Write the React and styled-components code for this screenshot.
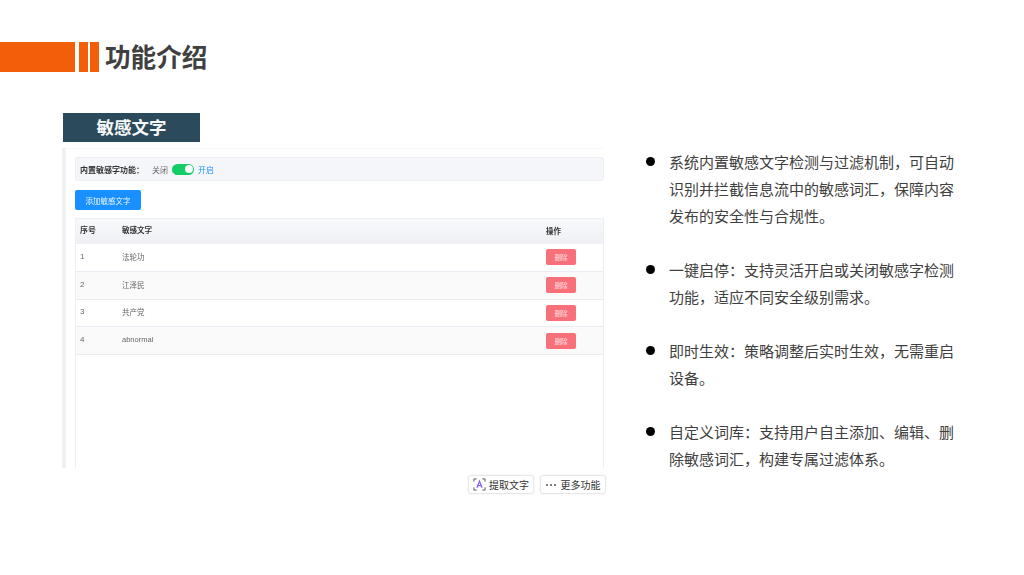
import React from 'react';
import styled, { createGlobalStyle } from 'styled-components';

const GlobalStyle = createGlobalStyle`
  html, body {
    margin: 0;
    padding: 0;
    background: #fff;
    font-family: "Noto Sans CJK SC", "Noto Sans", sans-serif;
  }
`;

const WORDS = [
  { id: 1, word: '法轮功' },
  { id: 2, word: '江泽民' },
  { id: 3, word: '共产党' },
  { id: 4, word: 'abnormal' },
];

const POINTS = [
  '系统内置敏感文字检测与过滤机制，可自动识别并拦截信息流中的敏感词汇，保障内容发布的安全性与合规性。',
  '一键启停：支持灵活开启或关闭敏感字检测功能，适应不同安全级别需求。',
  '即时生效：策略调整后实时生效，无需重启设备。',
  '自定义词库：支持用户自主添加、编辑、删除敏感词汇，构建专属过滤体系。',
];

export default function App() {
  return (
    <Slide>
      <GlobalStyle />
      <Header>
        <LongBar />
        <ShortBars>
          <ShortBar />
          <ShortBar />
        </ShortBars>
        <Title>功能介绍</Title>
      </Header>
      <Main>
        <LeftColumn>
          <Label>敏感文字</Label>
          <Shot>
            <ShotBody>
              <SwitchRow>
                <SwitchLabel>内置敏感字功能：</SwitchLabel>
                <SwitchOff>关闭</SwitchOff>
                <Toggle />
                <SwitchOn>开启</SwitchOn>
              </SwitchRow>
              <AddButton>添加敏感文字</AddButton>
              <Table>
                <HeadRow>
                  <IdCell>序号</IdCell>
                  <WordCell>敏感文字</WordCell>
                  <ActionCell>操作</ActionCell>
                </HeadRow>
                {WORDS.map(row => (
                  <Row key={row.id} $striped={row.id % 2 === 0}>
                    <IdCell>{row.id}</IdCell>
                    <WordCell>{row.word}</WordCell>
                    <ActionCell><DeleteButton>删除</DeleteButton></ActionCell>
                  </Row>
                ))}
              </Table>
            </ShotBody>
          </Shot>
          <ToolRow>
            <ToolButton>
              <svg width="13" height="13" viewBox="0 0 14 14" fill="none">
                <path d="M1 4V1h3M10 1h3v3M13 10v3h-3M4 13H1v-3" stroke="#555" strokeWidth="1" />
                <path d="M4.2 10.5 7 3.5l2.8 7M5.2 8.2h3.6" stroke="#8b5cf6" strokeWidth="1.3" />
              </svg>
              提取文字
            </ToolButton>
            <ToolButton>
              <Dots>
                <Dot />
                <Dot />
                <Dot />
              </Dots>
              更多功能
            </ToolButton>
          </ToolRow>
        </LeftColumn>
        <Points>
          {POINTS.map(text => (
            <Point key={text}>{text}</Point>
          ))}
        </Points>
      </Main>
    </Slide>
  );
}

const Slide = styled.div`
  width: 1024px;
  height: 575px;
  overflow: hidden;
  background: #fff;
  padding-top: 42px;
  box-sizing: border-box;
`;

const Header = styled.header`
  display: flex;
  align-items: center;
  height: 30px;
`;

const LongBar = styled.div`
  width: 75px;
  height: 30px;
  background: #f35f08;
`;

const ShortBars = styled.div`
  display: flex;
  gap: 2px;
  margin-left: 4px;
`;

const ShortBar = styled.div`
  width: 9px;
  height: 30px;
  background: #f35f08;
`;

const Title = styled.h1`
  margin: -3px 0 0 6px;
  font-size: 25.6px;
  line-height: 30px;
  font-weight: 700;
  color: #404040;
`;

const Main = styled.main`
  display: flex;
  margin-top: 41px;
  padding-left: 62px;
`;

const LeftColumn = styled.div`
  width: 544px;
  display: flex;
  flex-direction: column;
`;

const Label = styled.div`
  width: 137px;
  height: 29px;
  margin-left: 1px;
  background: #2b4a5b;
  color: #f4f6f8;
  font-size: 17.5px;
  font-weight: 700;
  line-height: 28px;
  text-align: center;
`;

const Shot = styled.div`
  width: 542px;
  height: 320px;
  margin-top: 6px;
  box-sizing: border-box;
  border-left: 4px solid #eff1f4;
  background: #fff;
  filter: blur(0.5px);
  overflow: hidden;
`;

const ShotBody = styled.div`
  padding: 8px 0 0 9px;
  height: 100%;
  box-sizing: border-box;
  display: flex;
  flex-direction: column;
  border-top: 1px solid #f8f9fa;
`;

const SwitchRow = styled.div`
  height: 24px;
  flex: none;
  box-sizing: border-box;
  display: flex;
  align-items: center;
  padding-left: 4px;
  background: #f5f6fa;
  border: 1px solid #eceef2;
  border-radius: 3px;
  font-size: 8px;
`;

const SwitchLabel = styled.span`
  color: #333;
  font-weight: 700;
  margin-right: 8px;
`;

const SwitchOff = styled.span`
  color: #666;
  margin-right: 4px;
`;

const SwitchOn = styled.span`
  color: #1890ff;
  margin-left: 4px;
`;

const Toggle = styled.span`
  position: relative;
  width: 22px;
  height: 11px;
  border-radius: 6px;
  background: #13ce66;

  &::after {
    content: "";
    position: absolute;
    top: 1.5px;
    right: 1.5px;
    width: 8px;
    height: 8px;
    border-radius: 50%;
    background: #fff;
  }
`;

const AddButton = styled.button`
  width: 66px;
  height: 20px;
  flex: none;
  margin-top: 9px;
  padding: 0;
  border: none;
  border-radius: 2px;
  background: #1890ff;
  color: #e8f4ff;
  font-family: inherit;
  font-size: 7.5px;
`;

const Table = styled.div`
  flex: 1;
  margin-top: 8px;
  border: 1px solid #eceef2;
  border-bottom: none;
  font-family: "Liberation Sans", "Noto Sans CJK SC", sans-serif;
  font-size: 7.5px;
  color: #666;
`;

const HeadRow = styled.div`
  height: 25px;
  box-sizing: border-box;
  padding-bottom: 3px;
  display: flex;
  align-items: center;
  background: linear-gradient(#f8f9fb, #eef0f4);
  color: #333;
  font-weight: 700;
`;

const Row = styled.div`
  height: 27.75px;
  box-sizing: border-box;
  display: flex;
  align-items: center;
  background: ${props => (props.$striped ? '#fafafa' : '#fff')};
  border-bottom: 1px solid #e8edf3;
`;

const IdCell = styled.span`
  width: 46px;
  padding: 0 0 2px 4px;
  box-sizing: border-box;
  font-size: 8px;
`;

const WordCell = styled.span`
  flex: 1;
  padding-bottom: 2px;
`;

const ActionCell = styled.span`
  width: 57px;
`;

const DeleteButton = styled.button`
  display: block;
  width: 30px;
  height: 16px;
  padding: 0;
  border: none;
  border-radius: 2px;
  background: #f8717a;
  color: #fde3e5;
  font-family: "Noto Sans CJK SC", sans-serif;
  font-size: 6.5px;
`;

const ToolRow = styled.div`
  display: flex;
  justify-content: flex-end;
  gap: 6px;
  margin-top: 7px;
`;

const ToolButton = styled.div`
  height: 19px;
  width: 66px;
  box-sizing: border-box;
  display: flex;
  align-items: center;
  justify-content: center;
  gap: 3px;
  border: 1px solid #e8e8e8;
  border-radius: 3px;
  background: #fff;
  box-shadow: 0 0 2px rgba(0, 0, 0, 0.08);
  color: #333;
  font-size: 10px;
  white-space: nowrap;
`;

const Dots = styled.span`
  display: flex;
  gap: 2px;
  margin-right: 2px;
`;

const Dot = styled.span`
  width: 2px;
  height: 2px;
  border-radius: 50%;
  background: #555;
`;

const Points = styled.ul`
  list-style: none;
  margin: 35px 0 0 63px;
  padding: 0;
  width: 285px;
  color: #404040;
  font-size: 15px;
  line-height: 27px;
`;

const Point = styled.li`
  position: relative;
  margin-bottom: 27px;

  &::before {
    content: "";
    position: absolute;
    left: -23px;
    top: 9px;
    width: 9px;
    height: 9px;
    border-radius: 50%;
    background: #000;
  }
`;
